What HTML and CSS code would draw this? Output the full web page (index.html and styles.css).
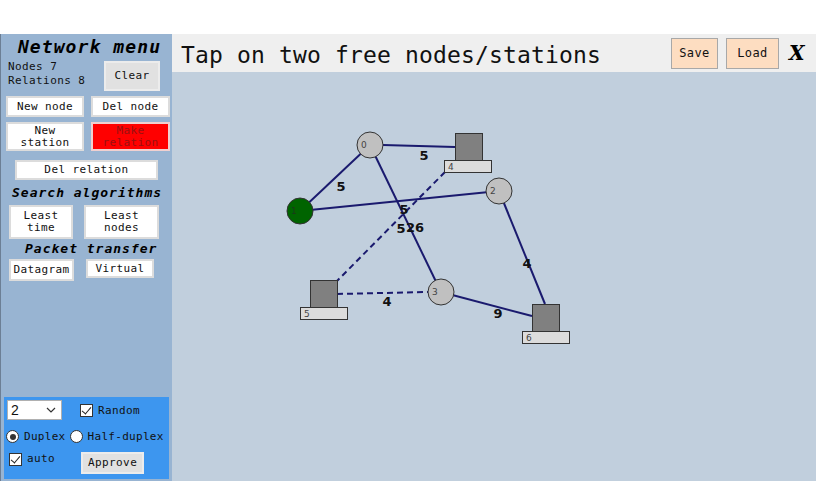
FILE: index.html
```html
<!DOCTYPE html>
<html>
<head>
<meta charset="utf-8">
<link rel="stylesheet" href="styles.css">
</head>
<body>
<div class="topband"></div>
<div class="app">
  <aside class="sidebar">
    <div class="menu-title">Network menu</div>
    <div class="row info-row">
      <div class="info"><div>Nodes 7</div><div>Relations 8</div></div>
      <button class="btn gray clear">Clear</button>
    </div>
    <div class="row r3">
      <button class="btn w78">New node</button>
      <button class="btn w79">Del node</button>
    </div>
    <div class="row r4">
      <button class="btn w78 tall">New<br>station</button>
      <button class="btn w79 tall red">Make<br>relation</button>
    </div>
    <div class="row r5">
      <button class="btn delrel">Del relation</button>
    </div>
    <div class="heading h1">Search algorithms</div>
    <div class="row r6">
      <button class="btn lt">Least<br>time</button>
      <button class="btn ln">Least<br>nodes</button>
    </div>
    <div class="heading h2">Packet transfer</div>
    <div class="row r7">
      <button class="btn dg">Datagram</button>
      <button class="btn vt">Virtual</button>
    </div>
    <div class="panel">
      <div class="prow">
        <div class="select">2<svg class="chev" width="10" height="6" viewBox="0 0 10 6"><path d="M1 1 L5 5 L9 1" fill="none" stroke="#333" stroke-width="1.2"/></svg></div>
        <span class="chk checked"></span><span class="lbl">Random</span>
      </div>
      <div class="prow p2">
        <span class="radio on"></span><span class="lbl">Duplex</span>
        <span class="radio"></span><span class="lbl">Half-duplex</span>
      </div>
      <div class="prow p3">
        <span class="chk checked"></span><span class="lbl">auto</span>
        <button class="btn gray approve">Approve</button>
      </div>
    </div>
  </aside>
  <main class="main">
    <header class="bar">
      <div class="status">Tap on two free nodes/stations</div>
      <button class="btn peach save">Save</button>
      <button class="btn peach load">Load</button>
      <span class="close">X</span>
    </header>
    <svg class="canvas" width="644" height="409" viewBox="172 72 644 409">
      <g stroke="#1a1a6e" stroke-width="2" fill="none">
        <line x1="383" y1="145" x2="455" y2="147"/>
        <line x1="300" y1="211" x2="370" y2="145"/>
        <line x1="300" y1="211" x2="499" y2="191"/>
        <line x1="370" y1="145" x2="441" y2="292"/>
        <line x1="499" y1="191" x2="545" y2="304"/>
        <line x1="441" y1="292" x2="532" y2="316"/>
        <line x1="445" y1="172" x2="337" y2="281" stroke-dasharray="6,4"/>
        <line x1="337" y1="294" x2="428" y2="292" stroke-dasharray="6,4"/>
      </g>
      <g font-family="DejaVu Sans, sans-serif" font-weight="bold" font-size="13" fill="#111" text-anchor="middle">
        <text x="424" y="160">5</text>
        <text x="341" y="191">5</text>
        <text x="404" y="214">5</text>
        <text x="401" y="233">5</text>
        <text x="415" y="232">26</text>
        <text x="527" y="268">4</text>
        <text x="387" y="306">4</text>
        <text x="498" y="318">9</text>
      </g>
      <g stroke="#333" stroke-width="1">
        <circle cx="370" cy="145" r="13" fill="#c0c0c0"/>
        <circle cx="300" cy="211" r="13" fill="#006400"/>
        <circle cx="499" cy="191" r="13" fill="#c0c0c0"/>
        <circle cx="441" cy="292" r="13" fill="#c0c0c0"/>
        <rect x="455.5" y="133.5" width="27" height="27" fill="#808080"/>
        <rect x="444.5" y="160.5" width="47" height="12" fill="#dcdcdc"/>
        <rect x="310.5" y="280.5" width="27" height="27" fill="#808080"/>
        <rect x="300.5" y="307.5" width="47" height="12" fill="#dcdcdc"/>
        <rect x="532.5" y="304.5" width="27" height="27" fill="#808080"/>
        <rect x="522.5" y="331.5" width="47" height="12" fill="#dcdcdc"/>
      </g>
      <g font-family="DejaVu Sans, sans-serif" font-size="9" fill="#444">
        <text x="361" y="148">0</text>
        <text x="291" y="214" fill="#1a3a1a">1</text>
        <text x="490" y="194">2</text>
        <text x="432" y="295">3</text>
        <text x="448" y="170">4</text>
        <text x="304" y="317">5</text>
        <text x="526" y="341">6</text>
      </g>
    </svg>
  </main>
</div>
</body>
</html>
```

FILE: styles.css
```css
* { box-sizing: border-box; }
html, body { margin: 0; padding: 0; background: #ffffff; overflow: hidden; }
body { width: 816px; height: 481px; font-family: "DejaVu Sans Mono", monospace; }
.topband { height: 34px; background: #ffffff; }
.app { display: flex; height: 447px; }
.sidebar {
  width: 172px; flex: none; background: #98b4d2;
  border-left: 1px solid #6c7f95;
  display: flex; flex-direction: column; position: relative;
  font-size: 11px; letter-spacing: 0.4px; color: #111;
}
.menu-title {
  font-weight: bold; font-style: italic; font-size: 18px; letter-spacing: 1.1px;
  text-align: center; line-height: 20px; margin-top: 3px; padding-left: 6px; color: #000;
}
.row { display: flex; }
.btn {
  font-family: "DejaVu Sans Mono", monospace; font-size: 11px; letter-spacing: 0.4px;
  background: #ffffff; border: 2px solid #dcdcdc; color: #111; padding: 0;
  line-height: 12px; text-align: center; cursor: pointer;
}
.btn.gray { background: #e1e1e1; border: 2px solid #ececec; }
.info-row { margin-top: 3px; height: 32px; }
.info { padding-left: 7px; line-height: 14px; width: 103px; padding-top: 0; }
.clear { width: 56px; height: 30px; margin-top: 1px; }
.r3 { margin-top: 4px; padding-left: 5px; gap: 7px; }
.w78 { width: 78px; height: 21px; }
.w79 { width: 79px; height: 21px; }
.r4 { margin-top: 5px; padding-left: 5px; gap: 7px; }
.tall { height: 29px; }
.red { background: #ff0000; border-color: #f0d0d0; color: #9a1010; }
.r5 { margin-top: 9px; padding-left: 14px; }
.delrel { width: 143px; height: 20px; }
.heading {
  font-weight: bold; font-style: italic; font-size: 13px; letter-spacing: 1px;
  line-height: 14px; color: #000;
}
.h1 { margin-top: 6px; padding-left: 11px; }
.r6 { margin-top: 5px; padding-left: 8px; gap: 11px; }
.lt { width: 64px; height: 34px; }
.ln { width: 75px; height: 34px; }
.h2 { margin-top: 3px; padding-left: 24px; }
.r7 { margin-top: 3px; padding-left: 8px; gap: 12px; align-items: flex-start; }
.dg { width: 65px; height: 22px; }
.vt { width: 68px; height: 19px; }
.panel {
  margin-top: auto; margin-bottom: 2px; margin-left: 3px; width: 165px; height: 82px;
  background: #3d96ef; padding: 3px 0 0 3px;
}
.prow { display: flex; align-items: center; }
.select {
  width: 55px; height: 20px; background: #fff; border: 1px solid #b0b0b0;
  display: flex; align-items: center; justify-content: space-between;
  padding: 0 5px 0 3px; font-family: "Liberation Sans", sans-serif; font-size: 14px; letter-spacing: 0;
}
.chk {
  width: 13px; height: 13px; background: #fff; border: 1px solid #333; display: inline-block;
  position: relative; flex: none;
}
.chk.checked::after {
  content: ""; position: absolute; left: 3px; top: 0px; width: 4px; height: 8px;
  border: solid #222; border-width: 0 1.5px 1.5px 0; transform: rotate(40deg);
}
.prow .chk { margin-left: 18px; }
.lbl { margin-left: 5px; }
.p2 { margin-top: 10px; margin-left: -1px; }
.radio {
  width: 13px; height: 13px; border-radius: 50%; background: #fff; border: 1px solid #333;
  display: inline-block; position: relative; flex: none;
}
.radio.on::after {
  content: ""; position: absolute; left: 2.5px; top: 2.5px; width: 6px; height: 6px;
  border-radius: 50%; background: #333;
}
.p2 .radio + .lbl + .radio { margin-left: 4px; }
.p2 .lbl { letter-spacing: 0.3px; }
.p3 { margin-top: 8px; align-items: flex-start; }
.p3 .chk { margin-left: 2px; margin-top: 2px; }
.p3 .lbl { margin-top: 1px; }
.approve { width: 63px; height: 22px; margin-left: 26px; margin-top: 1px; }
.main { flex: 1; display: flex; flex-direction: column; background: #c1cfdd; }
.bar {
  height: 38px; background: #efefef; display: flex; align-items: center; flex: none;
}
.status {
  font-family: "DejaVu Sans Mono", monospace; font-size: 23px; color: #111;
  margin-left: 9px; letter-spacing: 0.15px; flex: 1; padding-top: 4px;
}
.peach { background: #fdddc1; border: 1px solid #a8a8a8; font-size: 12px; }
.save { width: 47px; height: 31px; }
.load { width: 53px; height: 31px; margin-left: 8px; }
.close {
  font-family: "DejaVu Serif", serif; font-weight: bold; font-style: italic; font-size: 20px;
  margin-left: 10px; width: 27px; color: #000;
}
.canvas { display: block; }
```
